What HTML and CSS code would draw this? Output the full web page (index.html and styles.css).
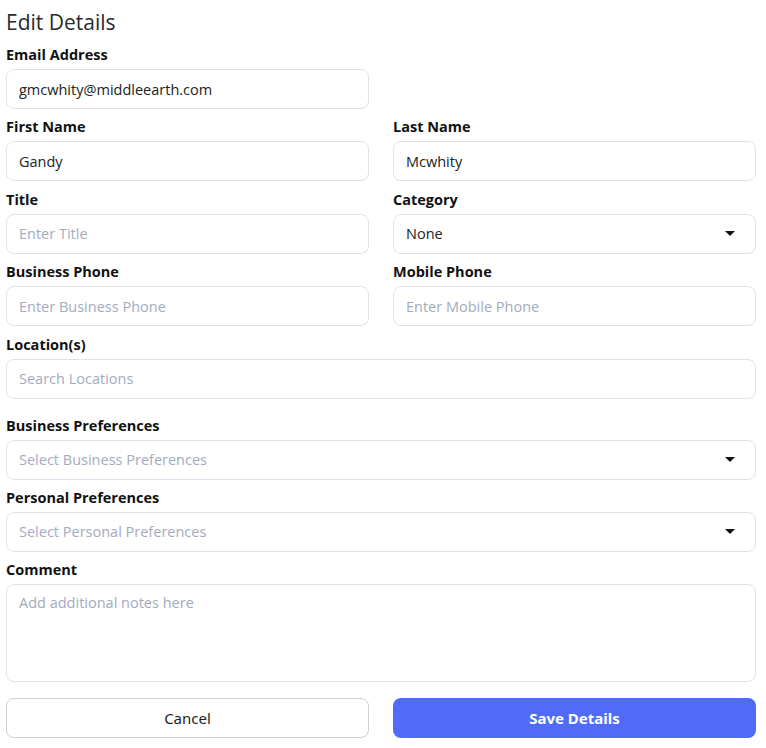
FILE: index.html
```html
<!DOCTYPE html>
<html lang="en">
<head>
    <meta charset="UTF-8">
    <meta name="viewport" content="width=device-width, initial-scale=1.0">
    <title>Edit Details</title>
    <link rel="stylesheet" href="styles.css">
</head>
<body>
    <div class="edit-form">
        <h2 class="form-title">Edit Details</h2>

        <div class="form-row">
            <div class="form-field">
                <label>Email Address</label>
                <input class="form-input" type="text" value="gmcwhity@middleearth.com">
            </div>
            <div class="form-field"></div>
        </div>

        <div class="form-row">
            <div class="form-field">
                <label>First Name</label>
                <input class="form-input" type="text" value="Gandy">
            </div>
            <div class="form-field">
                <label>Last Name</label>
                <input class="form-input" type="text" value="Mcwhity">
            </div>
        </div>

        <div class="form-row">
            <div class="form-field">
                <label>Title</label>
                <input class="form-input" type="text" placeholder="Enter Title">
            </div>
            <div class="form-field">
                <label>Category</label>
                <div class="form-select">
                    <span>None</span>
                    <span class="caret"></span>
                </div>
            </div>
        </div>

        <div class="form-row">
            <div class="form-field">
                <label>Business Phone</label>
                <input class="form-input" type="text" placeholder="Enter Business Phone">
            </div>
            <div class="form-field">
                <label>Mobile Phone</label>
                <input class="form-input" type="text" placeholder="Enter Mobile Phone">
            </div>
        </div>

        <div class="form-field full">
            <label>Location(s)</label>
            <input class="form-input" type="text" placeholder="Search Locations">
        </div>

        <div class="form-field full spaced">
            <label>Business Preferences</label>
            <div class="form-select placeholder">
                <span>Select Business Preferences</span>
                <span class="caret"></span>
            </div>
        </div>

        <div class="form-field full">
            <label>Personal Preferences</label>
            <div class="form-select placeholder">
                <span>Select Personal Preferences</span>
                <span class="caret"></span>
            </div>
        </div>

        <div class="form-field full">
            <label>Comment</label>
            <textarea class="form-input form-textarea" placeholder="Add additional notes here"></textarea>
        </div>

        <div class="form-actions">
            <button class="btn btn-cancel">Cancel</button>
            <button class="btn btn-save">Save Details</button>
        </div>
    </div>
</body>
</html>
```

FILE: styles.css
```css
body {
    margin: 0;
    background: #ffffff;
    font-family: "Open Sans", "Liberation Sans", sans-serif;
    color: #1d1d24;
}

.edit-form {
    width: 750px;
    padding: 0 0 0 6px;
}

.form-title {
    margin: 9px 0 9px;
    font-size: 21px;
    font-weight: 400;
    line-height: 27px;
    color: #2a2a30;
}

.form-row {
    display: grid;
    grid-template-columns: 1fr 1fr;
    column-gap: 24px;
}

.form-field {
    display: flex;
    flex-direction: column;
    margin-bottom: 8.4px;
}

.form-field.spaced {
    margin-top: 17px;
}

.form-field label {
    font-size: 14.5px;
    font-weight: 700;
    line-height: 20px;
    margin: 0 0 4px;
    color: #111;
}

.form-input,
.form-select {
    box-sizing: border-box;
    height: 40px;
    width: 100%;
    border: 1px solid #e1e1ec;
    border-radius: 8px;
    padding: 0 12px;
    font-family: inherit;
    font-size: 14.5px;
    color: #222;
    background: #fff;
    outline: none;
}

.form-input::placeholder {
    color: #a3abc0;
}

.form-select {
    display: flex;
    align-items: center;
    justify-content: space-between;
    padding-right: 20px;
}

.form-select.placeholder span:first-child {
    color: #a3abc0;
}

.caret {
    width: 0;
    height: 0;
    border-left: 5px solid transparent;
    border-right: 5px solid transparent;
    border-top: 5px solid #111;
}

.form-textarea {
    height: 98px;
    padding-top: 8px;
    resize: none;
    line-height: 20px;
}

.form-actions {
    display: grid;
    grid-template-columns: 1fr 1fr;
    column-gap: 24px;
    margin-top: 16px;
}

.btn {
    height: 40px;
    border-radius: 8px;
    font-family: "Noto Sans", "Open Sans", sans-serif;
    font-size: 15px;
    cursor: pointer;
}

.btn-cancel {
    background: #fff;
    border: 1px solid #cfd0d8;
    color: #1d1d24;
}

.btn-save {
    background: #4f6bf7;
    border: none;
    color: #fff;
    font-weight: 700;
}
```
